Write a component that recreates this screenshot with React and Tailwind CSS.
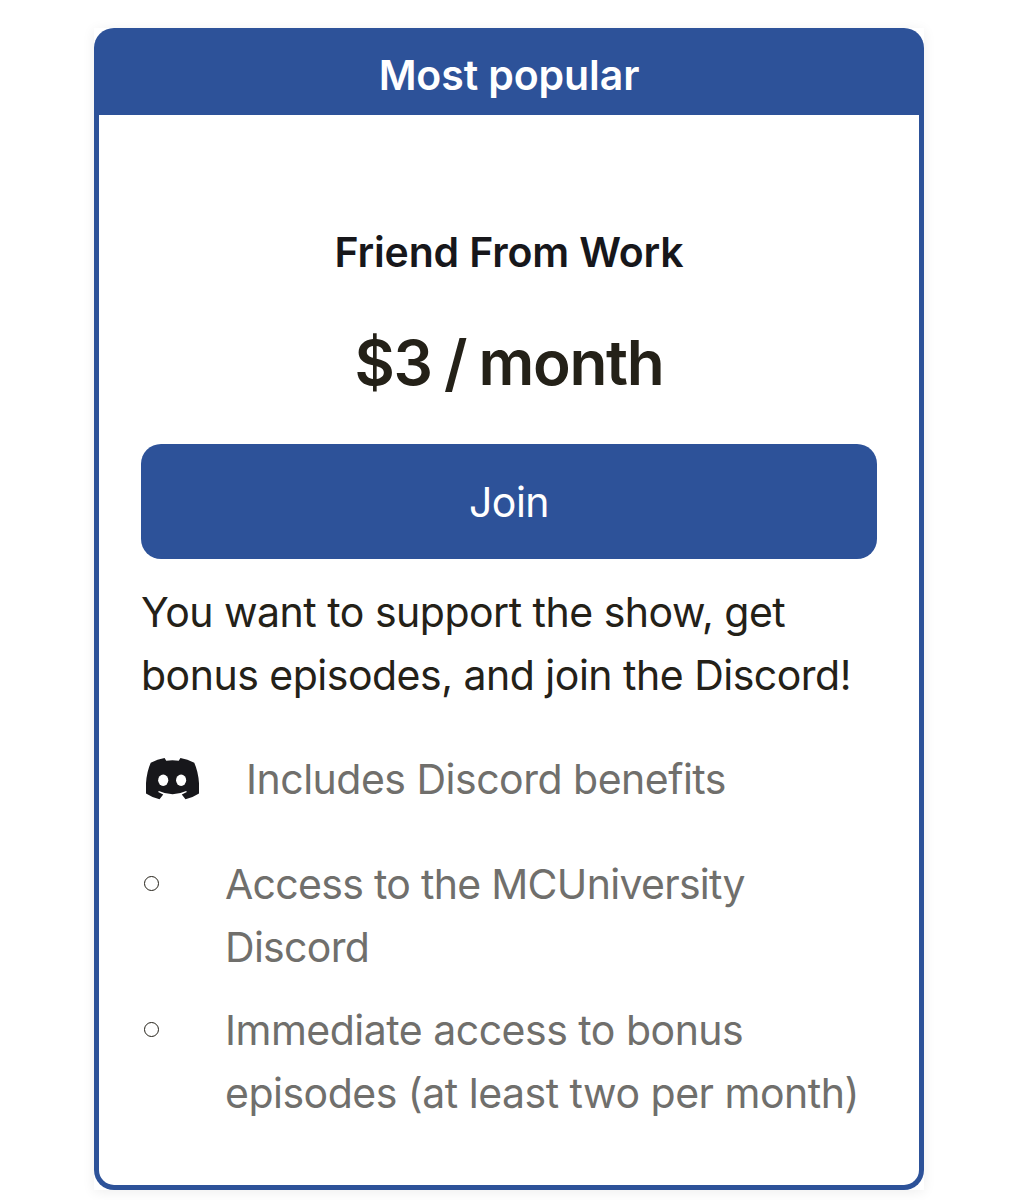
const tier = {
  badge: "Most popular",
  name: "Friend From Work",
  price: "$3 / month",
  description: ["You want to support the show, get", "bonus episodes, and join the Discord!"],
  benefits: [
    { lines: ["Access to the MCUniversity", "Discord"], tracking: "tracking-[-0.7px]" },
    { lines: ["Immediate access to bonus", "episodes (at least two per month)"], tracking: "tracking-[-0.5px]" },
  ],
};

function DiscordIcon({ className }) {
  return (
    <svg viewBox="0 0 157 122" className={className} aria-hidden="true">
      <path
        fill="currentColor"
        d="M14 14Q34 3 55 0L60 8Q78 5 97 8L102 0Q123 3 143 14Q160 52 157 105Q139 117 117 122L106 108L121 101L119 98Q79 117 38 98L36 101L51 108L40 122Q18 117 0 105Q-3 52 14 14Z"
      />
      <ellipse cx="51" cy="66" rx="15" ry="17" fill="white" />
      <ellipse cx="104" cy="66" rx="15" ry="17" fill="white" />
    </svg>
  );
}

function Benefit({ lines, tracking }) {
  return (
    <li className="flex">
      <span className="mt-[23px] ml-[3px] mr-[66px] size-[15px] shrink-0 rounded-full border-[1.5px] border-[#242118]" />
      <p className={`whitespace-nowrap ${tracking}`}>
        {lines.map((line) => (
          <span key={line} className="block">{line}</span>
        ))}
      </p>
    </li>
  );
}

export default function App() {
  return (
    <main className="h-[1200px] overflow-hidden bg-white pt-[28px] font-['Inter',sans-serif] text-[41px] leading-[63px] tracking-[-0.5px]">
      <div className="mx-auto w-[830px] bg-white shadow-[0_2px_12px_rgba(0,0,0,0.07)]">
        <section className="flex h-[1162px] flex-col rounded-[20px] bg-[#2d5299] px-[5px] pb-[5px]">
          <header className="h-[87px] shrink-0 pt-[16px] text-center font-[560] tracking-[-0.1px] text-white">
            {tier.badge}
          </header>
          <div className="flex-1 rounded-b-[15px] bg-white px-[42px]">
            <h2 className="mt-[106px] text-center font-semibold tracking-[-0.15px] text-[#17171b]">{tier.name}</h2>
            <p className="mt-[37px] text-center text-[62px] leading-[84px] font-semibold tracking-[-1.3px] [word-spacing:-2px] text-[#242118]">
              {tier.price}
            </p>
            <button className="mt-[39px] block h-[115px] w-full rounded-[20px] bg-[#2d5299] pt-[2px] text-white">Join</button>
            <p className="mt-[22px] whitespace-nowrap text-[#242118]">
              {tier.description.map((line) => (
                <span key={line} className="block">{line}</span>
              ))}
            </p>
            <div className="mt-[41px] flex items-center text-[#706f6c]">
              <DiscordIcon className="-mt-px mr-[47px] ml-[5px] w-[53px] text-[#17171b]" />
              Includes Discord benefits
            </div>
            <ul className="mt-[42px] space-y-[20px] text-[#706f6c]">
              {tier.benefits.map((benefit) => (
                <Benefit key={benefit.lines[0]} {...benefit} />
              ))}
            </ul>
          </div>
        </section>
      </div>
    </main>
  );
}
